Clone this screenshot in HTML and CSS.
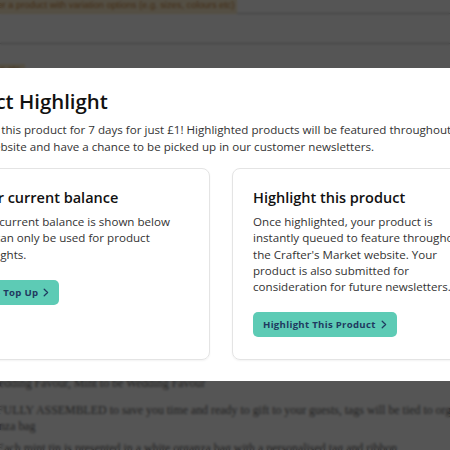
FILE: index.html
```html
<!DOCTYPE html>
<html lang="en">
<head>
<meta charset="utf-8">
<title>Product Highlight</title>
<link rel="stylesheet" href="styles.css">
</head>
<body>
<div class="page">
  <div class="hint-row hint-row-top"><span class="hint hint-first">Tick this box if you want to offer a product with variation options (e.g. sizes, colours etc)</span></div>
  <div class="form-row"></div>
  <div class="hint-row hint-row-second"><span class="hint hint-second">e.g. colours etc.</span></div>
  <div class="covered"></div>
  <div class="desc">
    <p class="desc-line desc-first">Wedding Favour, Mint to be Wedding Favour</p>
    <p class="desc-line desc-second">FULLY ASSEMBLED to save you time and ready to gift to your guests, tags will be tied to organic ribbon on the organza bag</p>
    <p class="desc-line desc-third">Each mint tin is presented in a white organza bag with a personalised tag and ribbon</p>
  </div>
</div>

<div class="backdrop">
  <div class="modal" role="dialog" aria-labelledby="modal-title">
    <h2 id="modal-title" class="modal-title">Product Highlight</h2>
    <p class="modal-lead">Highlight this product for 7 days for just £1! Highlighted products will be featured throughout the website and have a chance to be picked up in our customer newsletters.</p>
    <div class="cards">
      <div class="card">
        <h3 class="card-title">Your current balance</h3>
        <p class="card-text">Your current balance is shown below and can only be used for product highlights.</p>
        <div class="card-actions">
          <span class="balance">£0</span>
          <button class="btn" type="button">Top Up <svg class="chev" width="6" height="9" viewBox="0 0 6 9"><path d="M1.2 1.2L4.6 4.5L1.2 7.8" fill="none" stroke="currentColor" stroke-width="1.3" stroke-linecap="round" stroke-linejoin="round"/></svg></button>
        </div>
      </div>
      <div class="card">
        <h3 class="card-title">Highlight this product</h3>
        <p class="card-text">Once highlighted, your product is instantly queued to feature throughout the Crafter's Market website. Your product is also submitted for consideration for future newsletters.</p>
        <div class="card-actions">
          <button class="btn" type="button">Highlight This Product <svg class="chev" width="6" height="9" viewBox="0 0 6 9"><path d="M1.2 1.2L4.6 4.5L1.2 7.8" fill="none" stroke="currentColor" stroke-width="1.3" stroke-linecap="round" stroke-linejoin="round"/></svg></button>
        </div>
      </div>
    </div>
  </div>
</div>
</body>
</html>
```

FILE: styles.css
```css
html, body {
  margin: 0;
  padding: 0;
}
body {
  width: 450px;
  height: 450px;
  overflow: hidden;
  background: #ffffff;
  font-family: "Liberation Sans", Arial, sans-serif;
}

/* ---------- background page ---------- */
.page {
  margin-top: -6px;
}
.hint-row {
  white-space: nowrap;
}
.hint-row-top {
  height: 19px;
}
.hint {
  display: inline-block;
  background: #fbeccb;
  color: #c98a45;
  font-size: 9.3px;
  padding: 0 2px;
}
.hint-first {
  line-height: 18px;
  margin-left: -126px;
}
.form-row {
  height: 29px;
  border-top: 1px solid #c4c4c4;
  border-bottom: 1px solid #c4c4c4;
}
.hint-row-second {
  margin-top: 14px;
  height: 11px;
}
.hint-second {
  line-height: 11px;
  margin-left: -45px;
}
.covered {
  height: 306px;
}
.desc {
  margin-left: -22px;
  font-family: "Liberation Serif", "Times New Roman", serif;
  font-size: 11.9px;
  line-height: 16px;
  color: #6a6a6a;
  white-space: nowrap;
}
.desc-line {
  margin: 0;
}
.desc-first {
  padding-left: 11px;
  margin-bottom: 11px;
}
.desc-second {
  white-space: normal;
  width: 563px;
  text-indent: 19px;
  margin-bottom: 6px;
}
.desc-third {
  padding-left: 19px;
}

/* ---------- modal ---------- */
.backdrop {
  position: fixed;
  inset: 0;
  background: rgba(0, 0, 0, 0.667);
  backdrop-filter: blur(1px);
  padding-top: 68px;
}
.modal {
  box-sizing: border-box;
  width: 590px;
  margin-left: -74px;
  background: #ffffff;
  padding: 20px 24px 21px;
  font-family: "Open Sans", "Noto Sans", sans-serif;
  color: #333333;
}
.modal-title {
  margin: 0 0 8px -14px;
  font-size: 20.4px;
  line-height: 26px;
  font-weight: 600;
  color: #111111;
}
.modal-lead {
  margin: 0 0 13px;
  padding-left: 35px;
  text-indent: -35px;
  font-size: 11.6px;
  line-height: 16.5px;
  color: #333333;
}
.cards {
  display: grid;
  grid-template-columns: 1fr 1fr;
  gap: 22px;
}
.card {
  border: 1px solid #e4e4e4;
  border-radius: 8px;
  box-shadow: 0 1px 2px rgba(0, 0, 0, 0.05);
  padding: 19px 20px 22px;
}
.card-title {
  margin: 0 0 6px;
  font-size: 14.5px;
  line-height: 20px;
  font-weight: 600;
  color: #111111;
}
.card-text {
  margin: 0;
  font-size: 11.6px;
  line-height: 16.3px;
  color: #333333;
}
.card-actions {
  display: flex;
  align-items: center;
  gap: 9px;
  margin-top: 17px;
}
.balance {
  font-size: 11.6px;
  font-weight: 600;
  color: #111111;
}
.btn {
  display: inline-flex;
  align-items: center;
  gap: 5px;
  height: 25px;
  padding: 0 10px;
  border: none;
  border-radius: 5px;
  background: #5dcbb5;
  color: #1f3a60;
  font-family: "Open Sans", "Noto Sans", sans-serif;
  font-size: 9.6px;
  font-weight: 700;
  letter-spacing: 0.3px;
}
.chev {
  display: block;
}
```
